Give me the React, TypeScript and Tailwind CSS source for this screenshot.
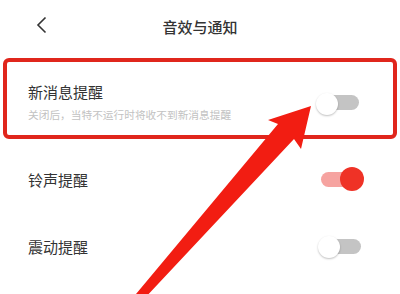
import React from "react";

function Toggle({ on }: { on: boolean }) {
  return (
    <div className="relative h-[24px] w-[46px] flex items-center">
      <div
        className={`mx-[3px] h-[15px] w-[40px] rounded-full ${on ? "bg-[#f6a3a0]" : "bg-[#c4c4c4]"}`}
      />
      {on ? (
        <div className="absolute right-0 top-0 h-[24px] w-[24px] rounded-full bg-[#ef3226]" />
      ) : (
        <div className="absolute left-0 top-[2px] h-[22px] w-[22px] rounded-full bg-white shadow-[0_1px_2px_rgba(0,0,0,0.25)]" />
      )}
    </div>
  );
}

export default function App() {
  return (
    <div
      className="relative h-[294px] w-[400px] overflow-hidden bg-white text-[#333]"
      style={{ fontFamily: '"Noto Sans CJK SC", "Noto Sans", sans-serif' }}
    >
      <header className="relative flex h-[52px] items-center justify-center">
        <svg className="absolute left-[35px] top-[16px]" width="14" height="18" viewBox="0 0 14 18">
          <path d="M10.5 1.5 L3 9 L10.5 16.5" fill="none" stroke="#333" strokeWidth="1.6" />
        </svg>
        <h1 className="text-[15px] font-medium leading-none">音效与通知</h1>
      </header>

      <div className="mx-[3px] mt-[6px] flex h-[81px] items-center justify-between rounded-[6px] border-[4px] border-[#e0261c] pl-[21px] pr-[31px]">
        <div className="flex flex-col pt-[8px]">
          <span className="text-[15px] leading-none">新消息提醒</span>
          <span className="mt-[11px] text-[10.7px] leading-none text-[#c2c2c2]">关闭后，当特不运行时将收不到新消息提醒</span>
        </div>
        <div className="mt-[8px]">
          <Toggle on={false} />
        </div>
      </div>

      <div className="flex h-[67px] items-center justify-between pl-[28px] pr-[36px] pt-[13px]">
        <span className="text-[15px] leading-none">铃声提醒</span>
        <Toggle on={true} />
      </div>
      <div className="flex h-[67px] items-center justify-between pl-[28px] pr-[36px] pt-[13px]">
        <span className="text-[15px] leading-none">震动提醒</span>
        <Toggle on={false} />
      </div>

      <svg className="pointer-events-none absolute left-0 top-0" width="400" height="294" viewBox="0 0 400 294">
        <polygon
          points="131,300 278,124 268,120 311,106 301,149 294,139 143,300"
          fill="#f21d12"
        />
      </svg>
    </div>
  );
}
